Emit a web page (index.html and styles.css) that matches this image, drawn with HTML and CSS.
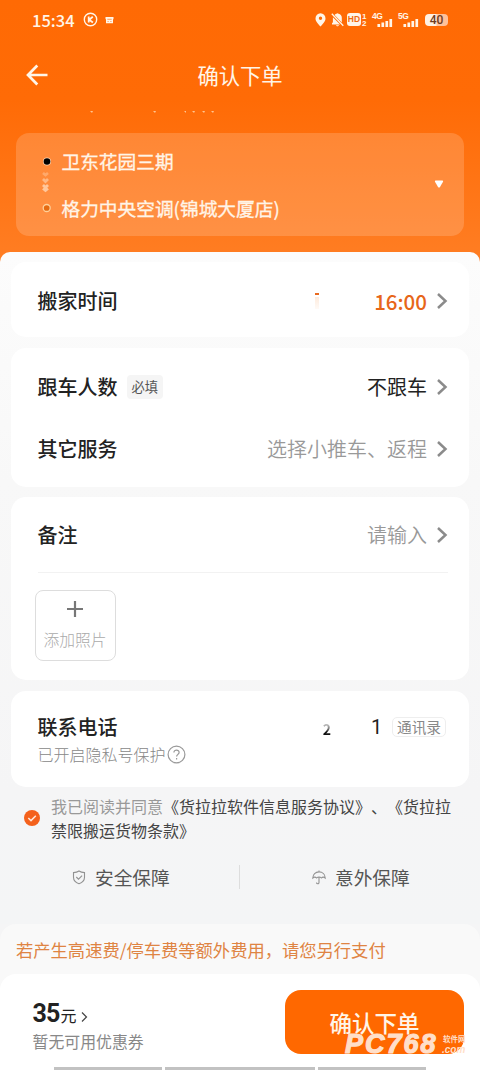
FILE: index.html
```html
<!DOCTYPE html>
<html lang="zh-CN">
<head>
<meta charset="utf-8">
<title>确认下单</title>
<link rel="stylesheet" href="styles.css">
</head>
<body>
<div class="app">
  <header class="hero">
    <div class="status">
      <span class="clock">15:34</span>
      <svg class="k-icon" width="15" height="15" viewBox="0 0 15 15" fill="none" stroke="currentColor" stroke-width="1.4"><circle cx="7.5" cy="7.5" r="6.2"/><path d="M5.7 4.6v5.8M9.8 4.8L6.2 7.7l3.7 2.7" stroke-width="1.8"/></svg>
      <svg class="cal-icon" width="9" height="8" viewBox="0 0 9 8"><path fill="currentColor" d="M.5 1h8v2.2H8v4H1v-4H.5z"/><path d="M2.3 3.3h4.4M2.5 5.5h1.2M5.3 5.5h1.2" stroke="#ff8a3c" stroke-width=".8"/></svg>
      <div class="status-right">
        <svg width="11" height="14" viewBox="0 0 11 14"><path fill="currentColor" fill-rule="evenodd" d="M5.5.3A5 5 0 0 0 .5 5.400C.5 8.600 3.500 11 5.500 13.500 7.500 11 10.500 8.600 10.500 5.400A5 5 0 0 0 5.500.3zm0 3.200a1.700 1.700 0 1 1 0 3.400 1.700 1.700 0 0 1 0-3.400z"/></svg>
        <svg class="bell" width="13" height="14" viewBox="0 0 13 14"><path fill="currentColor" d="M3.600 1.900C4.200 1.300 5 .9 5.500.8c.4-.9 1.700-.9 2 0 2.200.5 3.300 2 3.300 4v4.700zM1.900 4.200l7.200 7.400H1v-1.300l.9-1zM5 12.200h3c-.4 1.500-2.600 1.500-3 0z"/><path d="M.8.8l11.500 12" stroke="currentColor" stroke-width="1.300"/></svg>
        <span class="hd">HD</span>
        <span class="sims"><b>1</b><b>2</b></span>
        <span class="signal net4"><b>4G</b><svg width="16" height="8" viewBox="0 0 17 9" fill="currentColor"><path d="M0 5.500h3V9H0zM4.500 4h3v5h-3zM9 2.300h3V9H9zM13.500 0h3v9h-3z"/></svg></span>
        <span class="signal net5"><b>5G</b><svg width="16" height="8" viewBox="0 0 17 9" fill="currentColor"><path d="M0 5.500h3V9H0zM4.500 4h3v5h-3zM9 2.300h3V9H9zM13.500 0h3v9h-3z"/></svg></span>
        <span class="battery">40</span>
      </div>
    </div>
    <div class="titlebar">
      <svg class="back" width="22" height="22" viewBox="0 0 22 22" fill="none" stroke="currentColor" stroke-width="2.700"><path d="M11.300 1.500L2 11l9.300 9.500M2 11h19.500"/></svg>
      <h1>确认下单</h1>
    </div>
    <svg class="scrolled" width="480" height="3" viewBox="0 0 480 3" fill="#ffc48f"><path d="M90 0h3l-1 2zM153 0h3l-1 2zM184 0h2v2zM192 0h3l-1 2zM202 0h3l-1 2zM211 0h3l-1 2z"/></svg>
    <section class="route">
      <svg class="track" width="12" height="60" viewBox="0 0 12 60"><circle cx="7" cy="7.500" r="4" fill="#ffd3ae"/><circle cx="7" cy="7.500" r="3.300" fill="#000"/><g fill="none" stroke="#ffc79c" stroke-width="2.800"><path opacity=".5" d="M3 19l2.500 2L8 19"/><path opacity=".75" d="M3 25l2.500 2.500L8 25"/><path d="M3 31L5.500 33.500 8 31M3 34.500l2.500 2 2.500-2"/></g><circle cx="6.700" cy="54" r="3.500" fill="#e56b12" stroke="#ffd09a" stroke-width="1.300"/></svg>
      <div class="stops"><p>卫东花园三期</p><p>格力中央空调(锦城大厦店)</p></div>
      <svg class="drop" width="10" height="8" viewBox="0 0 10 8"><path fill="#fff" d="M1.500.5h7q1 .2.500 1.300L6 7Q5 8 4 7L1 1.800Q.5.700 1.500.5z"/></svg>
    </section>
  </header>

  <main class="sheet">
    <section class="card time-card">
      <div class="row"><h2>搬家时间</h2><i class="ghost"></i><span class="time">16:00</span><svg class="arrow" width="12" height="16" viewBox="0 0 12 16"><path d="M2 1l7.500 7L2 15"/></svg></div>
    </section>
    <section class="card service-card">
      <div class="row"><h2>跟车人数</h2><span class="tag">必填</span><span class="value">不跟车</span><svg class="arrow" width="12" height="16" viewBox="0 0 12 16"><path d="M2 1l7.500 7L2 15"/></svg></div>
      <div class="row"><h2>其它服务</h2><span class="value hint">选择小推车、返程</span><svg class="arrow" width="12" height="16" viewBox="0 0 12 16"><path d="M2 1l7.500 7L2 15"/></svg></div>
    </section>
    <section class="card note-card">
      <div class="row"><h2>备注</h2><span class="value hint">请输入</span><svg class="arrow" width="12" height="16" viewBox="0 0 12 16"><path d="M2 1l7.500 7L2 15"/></svg></div>
      <div class="photo"><svg width="16" height="16" viewBox="0 0 16 16"><path d="M8 0v16M0 8h16" stroke="#777" stroke-width="2.200"/></svg><span>添加照片</span></div>
    </section>
    <section class="card phone-card">
      <div class="row"><h2>联系电话</h2><span class="digit-faded">2</span><span class="digit">1</span><span class="contacts">通讯录</span></div>
      <div class="privacy"><span>已开启隐私号保护</span><svg width="19" height="19" viewBox="0 0 19 19" fill="none" stroke="#999" stroke-width="1.200"><circle cx="9.500" cy="9.500" r="8.400"/><path d="M6.900 7.600c0-3.500 5.400-3.300 5.200 0-.1 1.700-2.500 1.900-2.500 4M9.600 13.100v1.300"/></svg></div>
    </section>

    <div class="agree">
      <svg width="16" height="16" viewBox="0 0 16 16"><circle cx="8" cy="8" r="8" fill="#f4611c"/><path d="M4.300 8l2.700 2.600 4.800-4.800" fill="none" stroke="#ffe9dc" stroke-width="1.500"/></svg>
      <p><span>我已阅读并同意</span>《货拉拉软件信息服务协议》、《货拉拉<br>禁限搬运货物条款》</p>
    </div>
    <div class="guarantee">
      <div><svg width="14" height="15" viewBox="0 0 14 15" fill="none" stroke="#929292" stroke-width="1.100"><path d="M7 1c2 1.300 3.800 1.500 5.500 1.600v4.600c0 3.300-2.500 5.400-5.500 6.500-3-1.100-5.500-3.200-5.500-6.500V2.600C3.200 2.500 5 2.300 7 1z"/><path d="M4.300 7l2.200 2.200 3.600-3.600"/></svg><span>安全保障</span></div>
      <div><svg width="14" height="15" viewBox="0 0 14 15" fill="none" stroke="#929292" stroke-width="1.100"><path d="M7 .5v1.300M.8 8C.8 4.300 3.500 1.900 7 1.900S13.200 4.300 13.200 8c-1.200-1.200-2.800-1.200-3.800 0C8.200 6.700 5.800 6.700 4.600 8 3.600 6.800 2 6.800.8 8zM7 7.200v5.300c0 1.800-2.500 1.700-2.500 0"/></svg><span>意外保障</span></div>
    </div>
  </main>

  <div class="notice">若产生高速费/停车费等额外费用，请您另行支付</div>
  <footer class="checkout">
    <div class="price"><div class="amount"><strong>35</strong><span>元</span><svg width="7" height="12" viewBox="0 0 7 12" fill="none" stroke="#444" stroke-width="1.200"><path d="M1 1.500L5.500 6 1 10.500"/></svg></div><p>暂无可用优惠券</p></div>
    <button class="submit">确认下单</button>
    <div class="navlines"><i></i><i></i><i></i></div>
    <div class="watermark"><b>PC768</b><span><em>软件网</em><em>.com</em></span></div>
  </footer>
</div>
</body>
</html>
```

FILE: styles.css
```css
* { box-sizing: border-box; }
body { margin: 0; }
h1, h2, p { margin: 0; font-weight: 400; }
svg { display: block; flex: none; }

.app {
  width: 480px;
  height: 1070px;
  display: flex;
  flex-direction: column;
  overflow: hidden;
  background: linear-gradient(#ff6a04 0, #ff6b06 100px, #ff7e24 265px, #f5f5f6 266px);
  font-family: "Noto Sans CJK SC", sans-serif;
  color: #222;
}

.hero { height: 252px; flex: none; color: #fff5e8; }

.status { height: 40px; display: flex; align-items: center; padding: 0 32px 0 32px; }
.clock { font-size: 16.500px; line-height: 20px; font-weight: 500; width: 51px; }
.k-icon { margin-top: -2px; }
.cal-icon { margin-left: 7px; }
.status-right { margin-left: auto; display: flex; align-items: center; margin-top: -1px; }
.bell { margin-left: 5px; }
.hd {
  width: 14px; height: 13px; margin-left: 3px; border-radius: 3px;
  background: #fff5e8; color: #ef6a10;
  font: 700 8.500px/13px "Liberation Sans", sans-serif; text-align: center;
}
.sims { width: 5px; margin-left: 1px; display: flex; flex-direction: column; font: 700 8px/7px "Liberation Sans", sans-serif; }
.signal { width: 21px; height: 14px; display: flex; flex-direction: column; align-items: flex-end; font: 700 8.500px/6px "Liberation Sans", sans-serif; }
.signal b { align-self: flex-start; height: 6px; letter-spacing: -.5px; }
.net4 { margin-left: 5px; }
.net5 { margin-left: 5px; }
.battery {
  width: 23px; height: 12px; margin-left: 6px; border-radius: 4px;
  background: linear-gradient(90deg, #fff1e4 45%, #ffc19a 55%);
  color: #6f3b20; font: 500 12px/12px Roboto, sans-serif; text-align: center;
}

.titlebar { height: 70px; display: grid; grid-template-columns: 74px 1fr 74px; align-items: center; }
.back { margin-left: 26px; }
.titlebar h1 { font-size: 21.300px; line-height: 30px; text-align: center; }
.scrolled { margin-top: 1px; }

.route {
  margin: 19px 16px 0; height: 103px; padding: 16px 20px 0 24px;
  display: flex; border-radius: 13px; background: rgba(255, 255, 255, .17);
}
.track { margin-top: 5px; }
.stops { margin-left: 9.500px; font-size: 18.700px; line-height: 24px; font-weight: 500; -webkit-text-stroke: .3px #fff5e8; }
.stops p + p { margin-top: 23px; }
.drop { margin: 31px 0 0 auto; }

.sheet {
  height: 672px; flex: none; padding: 10px 11px 0; border-radius: 10px 10px 0 0;
  background: linear-gradient(#fcfcfc 0, #f8f8f8 230px, #f5f5f6 540px, #f4f5f6);
}
.card { border-radius: 15px; background: #fff; padding: 0 21px 0 26.500px; }
.card + .card { margin-top: 10px; }
.row { display: flex; align-items: center; height: 62px; }
.row h2 { font-size: 20px; line-height: 28px; font-weight: 500; }
.arrow { margin-left: 9px; fill: none; stroke: #8b8b8b; stroke-width: 2.500; }
.value { margin-left: auto; font-size: 20px; line-height: 28px; }
.hint { color: #999; font-weight: 350; }

.time-card { height: 75px; padding-top: 8px; }
.time { width: 54px; font-size: 20.500px; line-height: 28px; font-weight: 500; color: #e76619; text-align: right; }
.ghost { width: 4px; height: 16px; margin: 0 54px 0 auto; background: linear-gradient(#e96a20 2px, #fff 2px, #fff 4px, #fdebdd 4px, #fffaf6); }

.card.service-card { height: 139px; margin-top: 11px; padding-top: 8px; }
.tag { margin-left: 9px; padding: 0 5px; border-radius: 4px; background: #f5f5f5; font-size: 13.300px; line-height: 24px; color: #555; }

.note-card { height: 183px; }
.note-card .row { height: 76px; border-bottom: 1px solid #f2f2f2; }
.photo {
  width: 81px; height: 71px; margin: 17px 0 0 -3px; padding-top: 10px;
  border: 1px solid #ddd; border-radius: 8px;
  display: flex; flex-direction: column; align-items: center; gap: 12px;
  font-size: 15.800px; line-height: 22px; font-weight: 300; color: #aaa;
}

.card.phone-card { height: 96px; margin-top: 11px; padding-top: 16px; }
.phone-card .row { height: 40px; }
.digit-faded {
  margin: 4px 40px 0 auto; font-size: 14px; line-height: 18px; font-weight: 700;
  color: transparent; background: linear-gradient(#bbb 5px, #777 9px, #111 12px); -webkit-background-clip: text; background-clip: text;
}
.digit { width: 12px; font: 400 20px/28px Roboto, sans-serif; }
.contacts { margin: 0 2px 0 9px; width: 54px; border: 1px solid #eee; border-radius: 5px; font-size: 14.700px; line-height: 18px; color: #888; text-align: center; }
.privacy { display: flex; align-items: center; gap: 1px; height: 16px; margin-top: -1px; font-size: 16px; line-height: 16px; font-weight: 300; color: #888; }

.agree { display: flex; align-items: center; margin-top: 7px; padding-left: 13px; font-size: 16px; line-height: 24px; color: #444; }
.agree p { margin-left: 11px; white-space: nowrap; text-spacing-trim: space-all; }
.agree span { color: #999; }

.guarantee { display: flex; margin-top: 23px; color: #555; }
.guarantee div { display: flex; align-items: center; width: 228px; height: 24px; padding-left: 61px; gap: 9px; font-size: 18.700px; line-height: 24px; }
.guarantee div + div { border-left: 1px solid #ddd; padding-left: 72px; }

.notice {
  height: 66px; margin-bottom: -16px; flex: none; padding: 13px 16px;
  border-radius: 16px 16px 0 0; background: #f9f9f9;
  font-size: 17.300px; line-height: 26px; color: #df8443; white-space: nowrap;
}
.checkout { position: relative; height: 96px; flex: none; padding: 16px 16px 0 32.500px; display: flex; flex-wrap: wrap; justify-content: space-between; border-radius: 16px 16px 0 0; background: #fff; }
.price { padding-top: 8px; }
.amount { display: flex; align-items: baseline; height: 32px; }
.amount strong { font: 700 25px/32px Roboto, sans-serif; letter-spacing: -.9px; }
.amount span { margin-left: 1px; font-size: 16px; line-height: 32px; }
.amount svg { margin-left: 5px; align-self: center; position: relative; top: 3px; }
.price p { font-size: 15.900px; line-height: 22px; color: #888; margin-top: 1px; }
.submit { width: 179px; height: 64px; padding: 0; border: 0; border-radius: 16px; background: #ff6800; color: #fff5e8; font: 500 22.500px/64px "Noto Sans CJK SC", sans-serif; }
.navlines { width: 372px; height: 3px; margin: 12px 0 0 21.500px; display: grid; grid-template-columns: 108px 150px 108px; gap: 3px; }
.navlines i { background: #c2c2c2; }
.watermark { position: absolute; left: 345px; top: 54px; display: flex; color: #ffdfc9; }
.watermark b { width: 98px; font: italic 700 27px/32px "Liberation Sans", sans-serif; letter-spacing: 2px; -webkit-text-stroke: 1.200px #ffdfc9; }
.watermark span { display: flex; flex-direction: column; padding-top: 6px; }
.watermark em { font: 700 7.500px/10px "Noto Sans CJK SC", sans-serif; white-space: nowrap; }
.watermark em + em { font: italic 700 10px/11px "Liberation Sans", sans-serif; margin-left: -1px; }
```
